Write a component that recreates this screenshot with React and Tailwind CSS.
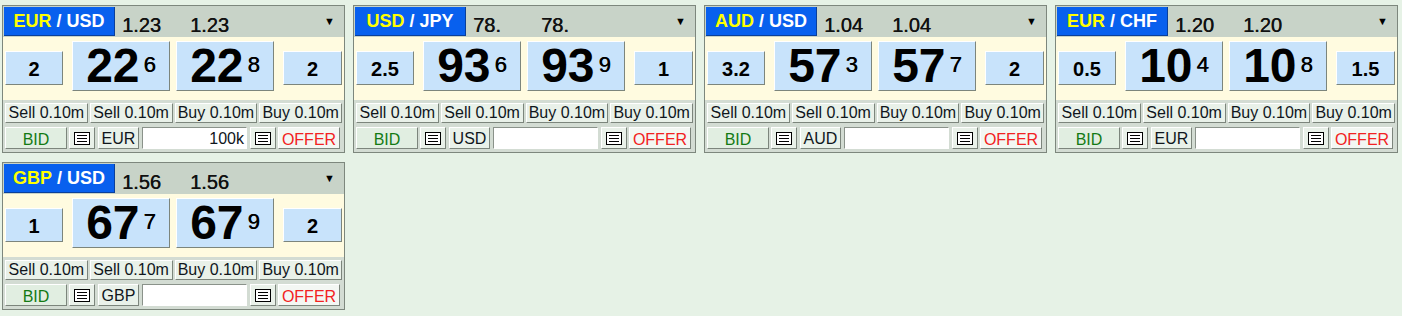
import React from 'react';

const tiles = [
  { base: 'EUR', quote: 'USD', bid: '1.23', ask: '1.23', left: '2', b1: '22', b1s: '6', b2: '22', b2s: '8', right: '2', ccy: 'EUR', amount: '100k' },
  { base: 'USD', quote: 'JPY', bid: '78.', ask: '78.', left: '2.5', b1: '93', b1s: '6', b2: '93', b2s: '9', right: '1', ccy: 'USD', amount: '' },
  { base: 'AUD', quote: 'USD', bid: '1.04', ask: '1.04', left: '3.2', b1: '57', b1s: '3', b2: '57', b2s: '7', right: '2', ccy: 'AUD', amount: '' },
  { base: 'EUR', quote: 'CHF', bid: '1.20', ask: '1.20', left: '0.5', b1: '10', b1s: '4', b2: '10', b2s: '8', right: '1.5', ccy: 'EUR', amount: '' },
  { base: 'GBP', quote: 'USD', bid: '1.56', ask: '1.56', left: '1', b1: '67', b1s: '7', b2: '67', b2s: '9', right: '2', ccy: 'GBP', amount: '' },
];

const font = { fontFamily: '"Liberation Sans", Arial, sans-serif' };

// raised bevel used by every button
const bevel = 'border border-t-white border-l-white border-b-[#7c857c] border-r-[#7c857c]';

const ListIcon = () => (
  <svg width="16" height="13" viewBox="0 0 16 13">
    <rect x="0.5" y="0.5" width="15" height="12" fill="white" stroke="black" />
    <line x1="3" y1="3.5" x2="13" y2="3.5" stroke="black" />
    <line x1="3" y1="6.5" x2="13" y2="6.5" stroke="black" />
    <line x1="3" y1="9.5" x2="13" y2="9.5" stroke="black" />
  </svg>
);

const BigPrice = ({ big, small, className }) => (
  <div className={`w-[98px] h-[50px] mt-[4px] bg-[#c8e3fb] ${bevel} flex items-center justify-center text-black ${className}`}>
    <span className="text-[48px] font-bold leading-none">{big}</span>
    <span className="text-[22px] leading-none ml-[4px] mt-[-3px] [text-shadow:0.4px_0_0_#000]">{small}</span>
  </div>
);

const Tile = ({ t }) => (
  <div className="w-[343px] h-[148px] border border-[#7d877d] flex flex-col">
    {/* header */}
    <div className="h-[31px] bg-[#c8d3c8] flex items-start pl-[1px] pt-[1px]">
      <div className="w-[111px] h-[29px] bg-[#0860ee] flex items-center justify-center text-[18px] font-bold border-b border-r border-[#0a3f9a]">
        <span className="text-[#ffff00]">{t.base}</span>
        <span className="text-white">&nbsp;/ {t.quote}</span>
      </div>
      <div className="ml-[7px] w-[68px] text-[20px] leading-[20px] pt-[8px] text-[#111] [text-shadow:0.4px_0_0_#111]">{t.bid}</div>
      <div className="text-[20px] leading-[20px] pt-[8px] text-[#111] [text-shadow:0.4px_0_0_#111]">{t.ask}</div>
      <div className="ml-auto mr-[9px] mt-[6px] text-[11px] text-black">▼</div>
    </div>

    {/* prices */}
    <div className="h-[63px] bg-[#fffbe0] flex items-start pl-[2px]">
      <div className={`w-[58px] h-[34px] mt-[14px] bg-[#c8e3fb] ${bevel} flex items-center justify-center pt-[1px] text-[20px] font-bold text-black`}>{t.left}</div>
      <BigPrice big={t.b1} small={t.b1s} className="ml-[9px]" />
      <BigPrice big={t.b2} small={t.b2s} className="ml-[6px]" />
      <div className={`ml-[9px] w-[59px] h-[34px] mt-[14px] bg-[#c8e3fb] ${bevel} flex items-center justify-center pt-[1px] text-[20px] font-bold text-black`}>{t.right}</div>
    </div>

    {/* trade buttons */}
    <div className="flex-1 bg-[#d3dcd3] pt-[3px] px-[2px]">
      <div className="grid grid-cols-4 gap-[2px] h-[20px]">
        {['Sell 0.10m', 'Sell 0.10m', 'Buy 0.10m', 'Buy 0.10m'].map((l, i) => (
          <div key={i} className={`bg-[#e9f1e9] ${bevel} flex items-center justify-center text-[16px] leading-none text-[#10161c]`}>{l}</div>
        ))}
      </div>
      <div className="flex h-[22px] mt-[4px] text-[16px] leading-none">
        <div className={`w-[62px] bg-[#e1eee1] ${bevel} flex items-center justify-center pt-[4px] text-[#137a13]`}>BID</div>
        <div className={`ml-[2px] w-[26px] bg-[#e9f1e9] ${bevel} flex items-center justify-center`}><ListIcon /></div>
        <div className={`ml-[3px] w-[41px] bg-[#e9f1e9] ${bevel} flex items-center justify-center pt-[2px] text-[#10161c]`}>{t.ccy}</div>
        <div className="ml-[3px] w-[105px] bg-white border border-t-[#8a928a] border-l-[#8a928a] border-b-white border-r-white flex items-center justify-end pr-[2px] pt-[2px] text-[#10161c]">{t.amount}</div>
        <div className={`ml-[3px] w-[26px] bg-[#e9f1e9] ${bevel} flex items-center justify-center`}><ListIcon /></div>
        <div className={`ml-[2px] w-[62px] bg-[#f3f7f3] ${bevel} flex items-center justify-center pt-[4px] text-[#f22222]`}>OFFER</div>
      </div>
    </div>
  </div>
);

export default function App() {
  return (
    <div className="min-h-screen bg-[#e6f2e6] pl-[2px] pt-[5px]" style={font}>
      <div className="grid grid-cols-[repeat(4,343px)] gap-x-[8px] gap-y-[9px]">
        {tiles.map((t, i) => (
          <Tile key={i} t={t} />
        ))}
      </div>
    </div>
  );
}
